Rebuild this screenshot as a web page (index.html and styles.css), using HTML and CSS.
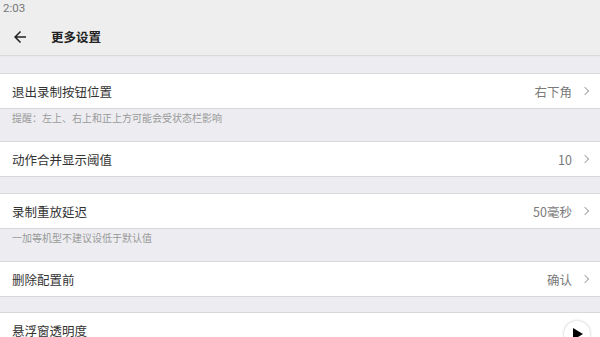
FILE: index.html
```html
<!DOCTYPE html>
<html lang="zh-CN">
<head>
<meta charset="utf-8">
<link rel="stylesheet" href="styles.css">
</head>
<body>
<div class="status">2:03</div>
<div class="toolbar">
  <svg class="back" viewBox="0 0 24 24" width="18" height="18"><path d="M20 11H7.83l5.59-5.59L12 4l-8 8 8 8 1.41-1.41L7.83 13H20v-2z" fill="#222"/></svg>
  <div class="title">更多设置</div>
</div>
<div class="content">
  <div class="gap first"></div>
  <div class="row"><span class="label">退出录制按钮位置</span><span class="value">右下角</span><span class="chev"></span></div>
  <div class="hint">提醒：左上、右上和正上方可能会受状态栏影响</div>
  <div class="row"><span class="label">动作合并显示阈值</span><span class="value">10</span><span class="chev"></span></div>
  <div class="gap"></div>
  <div class="row"><span class="label">录制重放延迟</span><span class="value">50毫秒</span><span class="chev"></span></div>
  <div class="hint">一加等机型不建议设低于默认值</div>
  <div class="row"><span class="label">删除配置前</span><span class="value">确认</span><span class="chev"></span></div>
  <div class="gap last"></div>
  <div class="row"><span class="label">悬浮窗透明度</span></div>
</div>
<div class="fab"><svg viewBox="0 0 10 12" width="10" height="12"><path d="M0 0 L10 6 L0 12 Z" fill="#000"/></svg></div>
</body>
</html>
```
FILE: styles.css
```css
html, body {
  margin: 0;
  padding: 0;
  width: 600px;
  height: 337px;
  overflow: hidden;
  background: #ededf1;
  font-family: "Noto Sans CJK SC", "Noto Sans", sans-serif;
}
.status {
  height: 17px;
  background: #eeeeee;
  color: #777;
  font-size: 11.5px;
  line-height: 17px;
  padding-left: 3px;
  font-family: Roboto, "Noto Sans CJK SC", sans-serif;
}
.toolbar {
  height: 38px;
  background: #eeeeee;
  display: flex;
  align-items: center;
  box-shadow: 0 1px 1px rgba(0,0,0,0.08);
  position: relative;
  z-index: 1;
}
.back {
  margin-left: 11px;
  margin-top: 1px;
}
.title {
  margin-left: 22px;
  font-size: 12.5px;
  font-weight: bold;
  color: #222;
}
.content {
  display: flex;
  flex-direction: column;
}
.gap {
  height: 16px;
}
.gap.first {
  height: 18px;
}
.gap.last {
  height: 15px;
}
.row {
  height: 34px;
  flex: none;
  background: #fff;
  border-top: 1px solid #d8d8da;
  border-bottom: 1px solid #d8d8da;
  display: flex;
  align-items: center;
  padding: 0 12px;
}
.hint + .row {
  border-top: none;
}
.label {
  font-size: 12.5px;
  color: #333;
  flex: 1;
}
.value {
  font-size: 12.5px;
  color: #7a7a7a;
}
.chev {
  width: 5px;
  height: 5px;
  border-right: 1.2px solid #aaa;
  border-top: 1.2px solid #aaa;
  transform: rotate(45deg);
  margin-left: 10px;
  margin-right: 0;
}
.hint {
  height: 33px;
  flex: none;
  font-size: 10px;
  color: #999;
  padding: 1px 12px 0;
  box-sizing: border-box;
  border-bottom: 1px solid #d8d8da;
}
.fab {
  position: absolute;
  left: 564px;
  top: 321px;
  width: 26px;
  height: 26px;
  border-radius: 50%;
  background: #fff;
  box-shadow: 0 0 3px rgba(0,0,0,0.25);
  display: flex;
  align-items: center;
  justify-content: center;
}
.fab svg {
  margin-left: 2px;
}
```
